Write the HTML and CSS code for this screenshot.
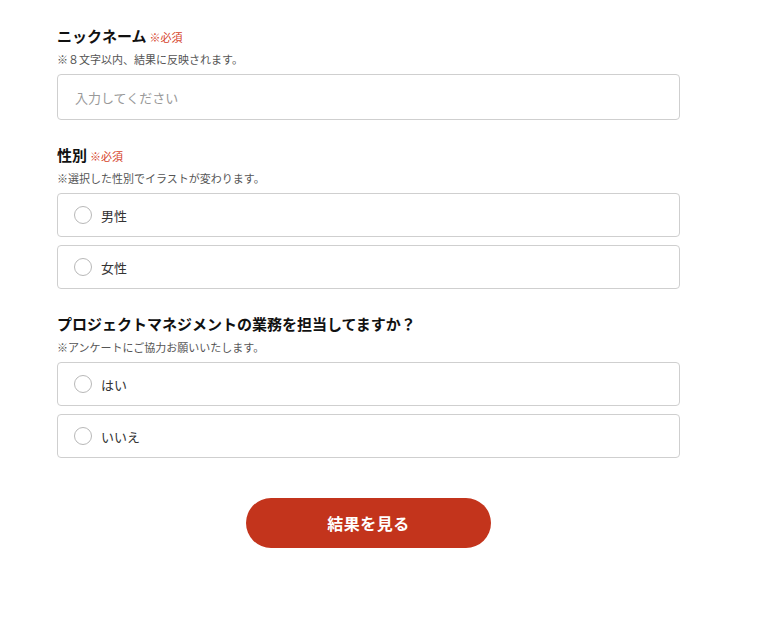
FILE: index.html
```html
<!DOCTYPE html>
<html lang="ja">
<head>
<meta charset="utf-8">
<title>フォーム</title>
<link rel="stylesheet" href="styles.css">
</head>
<body>
<form class="form">
  <section class="field">
    <h2 class="field-title">ニックネーム<span class="req">※必須</span></h2>
    <p class="field-note">※８文字以内、結果に反映されます。</p>
    <input class="text-input" type="text" placeholder="入力してください">
  </section>

  <section class="field">
    <h2 class="field-title">性別<span class="req">※必須</span></h2>
    <p class="field-note">※選択した性別でイラストが変わります。</p>
    <div class="options">
      <label class="option"><span class="radio"></span><span class="option-label">男性</span></label>
      <label class="option"><span class="radio"></span><span class="option-label">女性</span></label>
    </div>
  </section>

  <section class="field">
    <h2 class="field-title">プロジェクトマネジメントの業務を担当してますか？</h2>
    <p class="field-note">※アンケートにご協力お願いいたします。</p>
    <div class="options">
      <label class="option"><span class="radio"></span><span class="option-label">はい</span></label>
      <label class="option"><span class="radio"></span><span class="option-label">いいえ</span></label>
    </div>
  </section>

  <div class="actions">
    <button class="submit" type="button">結果を見る</button>
  </div>
</form>
</body>
</html>
```

FILE: styles.css
```css
* { box-sizing: border-box; }

body {
  margin: 0;
  background: #fff;
  font-family: "Noto Sans CJK JP", "Noto Sans", sans-serif;
  color: #222;
}

.form {
  width: 623px;
  margin-left: 57px;
  padding-top: 25px;
  display: flex;
  flex-direction: column;
  gap: 24px;
}

.field {
  display: flex;
  flex-direction: column;
}

.field-title {
  margin: 0;
  height: 22px;
  font-size: 15px;
  line-height: 22px;
  font-weight: 700;
  color: #111;
  white-space: nowrap;
}

.req {
  font-size: 11px;
  line-height: 1;
  font-weight: 400;
  color: #d5432a;
  margin-left: 3px;
  vertical-align: baseline;
}

.field-note {
  margin: 4px 0 7px;
  height: 16px;
  font-size: 11px;
  line-height: 16px;
  color: #555;
}

.text-input {
  display: block;
  width: 100%;
  height: 46px;
  border: 1px solid #cfcfcf;
  border-radius: 4px;
  padding: 0 17px;
  font-family: inherit;
  font-size: 13px;
  color: #333;
  outline: none;
}

.text-input::placeholder {
  color: #999;
}

.options {
  display: flex;
  flex-direction: column;
  gap: 8px;
}

.option {
  display: flex;
  align-items: center;
  height: 44px;
  border: 1px solid #cfcfcf;
  border-radius: 4px;
  padding-left: 16px;
}

.radio {
  width: 18px;
  height: 18px;
  border: 1px solid #b8b8b8;
  border-radius: 50%;
  background: #fff;
  flex: none;
}

.option-label {
  margin-left: 9px;
  font-size: 13px;
  color: #333;
}

.actions {
  display: flex;
  justify-content: center;
  margin-top: 16px;
}

.submit {
  width: 245px;
  height: 50px;
  border: none;
  border-radius: 25px;
  background: #c3341c;
  color: #fff;
  font-family: inherit;
  font-size: 16px;
  font-weight: 700;
  letter-spacing: 0.5px;
}
```
